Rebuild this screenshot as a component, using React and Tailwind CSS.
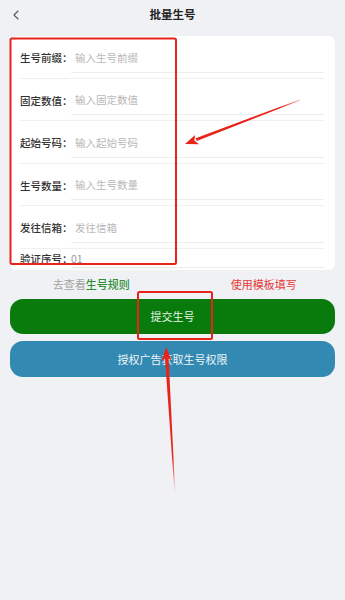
import { ChevronLeft } from 'lucide-react';

const fields = [
  { label: '生号前缀：', placeholder: '输入生号前缀' },
  { label: '固定数值：', placeholder: '输入固定数值' },
  { label: '起始号码：', placeholder: '输入起始号码' },
  { label: '生号数量：', placeholder: '输入生号数量' },
  { label: '发往信箱：', placeholder: '发往信箱' },
];

function Row({ field }) {
  return (
    <div className="pt-[7.5px]">
      <div className="flex items-center">
        <span className="w-[51px] shrink-0 whitespace-nowrap text-[10.5px] font-medium text-[#333]">{field.label}</span>
        <div className="flex h-[29px] min-w-0 flex-1 items-center border-b border-[#ececec] pl-[4px]">
          <input
            className="w-full bg-transparent text-[10.5px] text-[#333] outline-none placeholder:text-[#b8b8b8]"
            placeholder={field.placeholder}
          />
        </div>
      </div>
      <div className="mt-[5px] h-px bg-[#f0f0f0]" />
    </div>
  );
}

// red markup drawn on top of the screenshot
function Annotations() {
  return (
    <svg className="pointer-events-none absolute left-0 top-0" width="345" height="600" viewBox="0 0 345 600">
      <defs>
        <linearGradient id="fade" x1="0" y1="347" x2="0" y2="495" gradientUnits="userSpaceOnUse">
          <stop offset="0" stopColor="#e8231a" />
          <stop offset="0.75" stopColor="#e8231a" />
          <stop offset="1" stopColor="#e8231a" stopOpacity="0" />
        </linearGradient>
        <linearGradient id="fade2" x1="185" y1="0" x2="302" y2="0" gradientUnits="userSpaceOnUse">
          <stop offset="0" stopColor="#e8231a" />
          <stop offset="0.8" stopColor="#e8231a" />
          <stop offset="1" stopColor="#e8231a" stopOpacity="0.2" />
        </linearGradient>
      </defs>
      <rect x="10.5" y="38.5" width="165.5" height="225.5" rx="1.5" fill="none" stroke="#e8231a" strokeWidth="2" />
      <rect x="138" y="292" width="74" height="47" rx="1.5" fill="none" stroke="#e8231a" strokeWidth="2" />
      {/* arrow to the fields */}
      <polygon points="195.7,138.3 196.7,141.1 300.2,100.5 299.8,99.5" fill="url(#fade2)" />
      <polygon points="185,144 199,144.3 194.3,140.4 195.1,135" fill="#e8231a" />
      {/* arrow to the button */}
      <polygon points="165,358 168.6,358 175.3,495 174.7,495" fill="url(#fade)" />
      <polygon points="166.3,347 171.5,360.5 166.9,357.5 161.5,361" fill="#e8231a" />
    </svg>
  );
}

export default function App() {
  return (
    <div className="relative h-[600px] w-[345px] overflow-hidden bg-[#f0f1f5] font-['Noto_Sans_CJK_SC','Noto_Sans',sans-serif]">
      <div className="relative flex h-[30px] items-center justify-center">
        <ChevronLeft className="absolute left-[8px] top-[7px] h-[16px] w-[16px] text-[#555]" strokeWidth={1.6} />
        <h1 className="text-[11.5px] font-bold text-[#222]">批量生号</h1>
      </div>

      <div className="mx-[10px] mt-[6px] h-[234px] overflow-hidden rounded-[6px] bg-white pl-[10px] pr-[11px]">
        {fields.map((f) => (
          <Row key={f.label} field={f} />
        ))}
        <div className="flex items-center pt-[2px]">
          <span className="w-[51px] shrink-0 whitespace-nowrap text-[10.5px] font-medium text-[#333]">验证序号：</span>
          <div className="flex h-[17px] flex-1 items-center border-b border-[#ececec]">
            <span className="text-[10.5px] text-[#999]">01</span>
          </div>
        </div>
      </div>

      <div className="mx-[10px] grid h-[28px] grid-cols-2 items-center text-[11px]">
        <p className="text-center">
          <span className="text-[#a3a3a3]">去查看</span>
          <span className="font-medium text-[#2f8f35]">生号规则</span>
        </p>
        <p className="pl-[20px] text-center text-[#e53935]">使用模板填写</p>
      </div>

      <div className="mx-[10px] mt-px flex flex-col gap-[7px]">
        <button className="flex h-[35px] items-center justify-center rounded-[13px] bg-[#087b0c] text-[11px] text-[#e8f2e8]">
          提交生号
        </button>
        <button className="flex h-[36px] items-center justify-center rounded-[13px] bg-[#3289b1] text-[11px] text-[#eef5f9]">
          授权广告获取生号权限
        </button>
      </div>

      <Annotations />
    </div>
  );
}
